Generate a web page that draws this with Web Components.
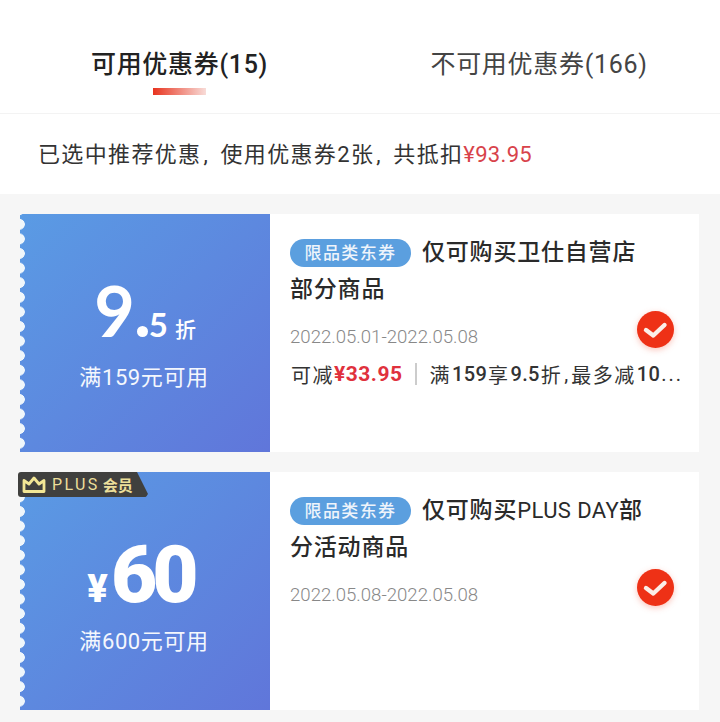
<!DOCTYPE html>
<html lang="zh-CN">
<head>
<meta charset="utf-8">
<title>优惠券</title>
<style>
  html, body { margin: 0; padding: 0; }
  body {
    width: 720px;
    height: 722px;
    overflow: hidden;
    background: #f6f6f6;
    font-family: "Roboto", "Noto Sans CJK SC", sans-serif;
  }
</style>
</head>
<body>
<coupon-tabs></coupon-tabs>
<coupon-summary>已选中推荐优惠<span class="comma">,</span>使用优惠券2张<span class="comma">,</span>共抵扣<span slot="amount">¥93.95</span></coupon-summary>
<coupon-list>
  <coupon-card range="2022.05.01-2022.05.08" limit="满159元可用" kind="discount">
    <span slot="first">仅可购买卫仕自营店</span>
    <span slot="second">部分商品</span>
    <coupon-note slot="note"></coupon-note>
  </coupon-card>
  <coupon-card range="2022.05.08-2022.05.08" limit="满600元可用" kind="cash" plus>
    <span slot="first">仅可购买<span style="font-size:22px;font-weight:400;letter-spacing:0.4px">PLUS DAY</span>部</span>
    <span slot="second">分活动商品</span>
  </coupon-card>
</coupon-list>

<script>
/* tabs on top */
class CouponTabs extends HTMLElement {
  constructor() {
    super();
    this.attachShadow({ mode: "open" });
    this.shadowRoot.innerHTML = `
      <style>
        :host {
          display: grid;
          grid-template-columns: 360px 360px;
          height: 113px;
          background: #fff;
          border-bottom: 1px solid #f3f3f3;
        }
        .tab {
          display: flex;
          flex-direction: column;
          align-items: center;
          padding-top: 45px;
          font-size: 25px;
          line-height: 40px;
          letter-spacing: 0.7px;
          color: #333;
        }
        .tab.on { color: #222; font-weight: 500; padding-right: 1px; }
        .tab.off { font-weight: 400; color: #444; padding-right: 2px; }
        .bar {
          width: 53px;
          height: 7px;
          margin-top: 3px;
          background: linear-gradient(90deg, #e8341f, #f8dcd8);
        }
        .tab > span { display: block; height: 40px; }
      </style>
      <div class="tab on"><span>可用优惠券(15)</span><div class="bar"></div></div>
      <div class="tab off"><span>不可用优惠券(166)</span></div>
    `;
  }
}
customElements.define("coupon-tabs", CouponTabs);

/* line under tabs */
class CouponSummary extends HTMLElement {
  constructor() {
    super();
    this.attachShadow({ mode: "open" });
    this.shadowRoot.innerHTML = `
      <style>
        :host {
          display: flex;
          align-items: center;
          height: 80px;
          padding-left: 38px;
          background: #fff;
          font-size: 22px;
          letter-spacing: 1.35px;
          color: #333;
        }
        div { margin-top: -4px; }
        ::slotted(span[slot="amount"]) { color: #d8434b; letter-spacing: 0.3px; }
        ::slotted(.comma) { display: inline-block; width: 19px; text-indent: 2px; }
      </style>
      <div><slot></slot><slot name="amount"></slot></div>
    `;
  }
}
customElements.define("coupon-summary", CouponSummary);

class CouponList extends HTMLElement {
  constructor() {
    super();
    this.attachShadow({ mode: "open" });
    this.shadowRoot.innerHTML = `
      <style>
        :host {
          display: flex;
          flex-direction: column;
          gap: 20px;
          padding: 20px 21px 0 20px;
        }
      </style>
      <slot></slot>
    `;
  }
}
customElements.define("coupon-list", CouponList);

/* 可减 row, only on first card */
class CouponNote extends HTMLElement {
  constructor() {
    super();
    this.attachShadow({ mode: "open" });
    this.shadowRoot.innerHTML = `
      <style>
        :host {
          display: flex;
          align-items: center;
          height: 32px;
          padding-left: 1px;
          font-size: 20px;
          letter-spacing: 1.5px;
          color: #333;
          white-space: nowrap;
        }
        .save { color: #e0313d; font-weight: 700; letter-spacing: 0.5px; font-size: 21px; }
        .sep { width: 2px; height: 22px; background: #ccc; margin: 0 13px 0 12px; flex: none; }
        b { font-weight: 500; letter-spacing: 0.3px; margin: 0 1px 0 1px; }
        .comma { display: inline-block; width: 20px; text-indent: 2px; }
        .more { letter-spacing: 2px; }
      </style>
      <span>可减</span><span class="save">¥33.95</span><span class="sep"></span><span>满</span><b>159</b><span>享</span><b>9.5</b><span>折</span><span class="comma">,</span><span>最多减</span><b>10</b><span class="more">...</span>
    `;
  }
}
customElements.define("coupon-note", CouponNote);

class CouponCard extends HTMLElement {
  constructor() {
    super();
    this.attachShadow({ mode: "open" });
  }
  connectedCallback() {
    const range = this.getAttribute("range") || "";
    const limit = this.getAttribute("limit") || "";
    const isCash = this.getAttribute("kind") === "cash";
    const value = isCash
      ? `<div class="value cash"><span class="yen">¥</span><span class="big">60</span></div>`
      : `<div class="value disc"><span class="nine">9</span><span class="dot"></span><span class="five">5</span><span class="zhe">折</span></div>`;
    const plus = this.hasAttribute("plus")
      ? `<div class="plus">
          <svg viewBox="0 0 24 18" fill="none" stroke="#f3e795" stroke-width="2.8" stroke-linejoin="round">
            <path d="M2 4.5 L7 8 L12 2 L17 8 L22 4.5 V15.5 H2 Z"/>
          </svg>
          <span class="plus-en">PLUS</span><span class="plus-cn">会员</span>
        </div>`
      : "";
    this.shadowRoot.innerHTML = `
      <style>
        :host {
          display: grid;
          grid-template-columns: 250px 1fr;
          height: 238px;
          background: #fff;
          position: relative;
        }
        .left {
          position: relative;
          display: flex;
          flex-direction: column;
          align-items: center;
          color: #fff;
          background: linear-gradient(135deg, #5a9be4 0%, #6076da 100%);
        }
        /* scalloped edge */
        .left::before {
          content: "";
          position: absolute;
          left: 0;
          top: 0;
          bottom: 0;
          width: 6px;
          background-image: radial-gradient(circle at -0.5px 50%, #f0f7fb 0, #f0f7fb 5px, transparent 5.6px);
          background-size: 6px 14.6px;
          background-position: 0 3px;
        }
        .value { display: flex; align-items: baseline; justify-content: center; }
        .disc { margin-top: 57px; height: 78px; font-family: "Lato", "Noto Sans CJK SC", sans-serif; }
        .nine { font-size: 70px; line-height: 78px; font-weight: 700; }
        .dot { width: 11px; height: 11px; border-radius: 50%; background: #fff; margin: 0 1px 0 2px; }
        .five { font-size: 33px; font-weight: 700; }
        .zhe { font-size: 21px; margin-left: 7px; font-weight: 500; font-family: "Noto Sans CJK SC", sans-serif; }
        .cash { margin-top: 64px; height: 77px; margin-right: 9px; font-family: "Roboto", sans-serif; }
        .yen { font-size: 38px; font-weight: 900; margin-right: 3px; line-height: 78px; }
        .big { font-size: 80px; font-weight: 900; line-height: 78px; letter-spacing: -5px; }
        .limit {
          font-size: 22px;
          line-height: 32px;
          letter-spacing: 0.6px;
          margin-top: 13px;
          padding-right: 2px;
          color: #f4f7fd;
          font-family: "Roboto", "Noto Sans CJK SC", sans-serif;
        }
        .plus {
          position: absolute;
          left: -2px;
          top: 0;
          height: 25px;
          width: 130px;
          padding-left: 4px;
          box-sizing: border-box;
          display: flex;
          align-items: center;
          background: #40403e;
          color: #ecdf9a;
          border-radius: 3px 0 3px 3px;
          clip-path: polygon(0 0, 119px 0, 130px 22px, 128px 25px, 0 25px);
          z-index: 1;
        }
        .plus svg { flex: none; margin-right: 6px; width: 24px; height: 18px; }
        .plus-en { font-size: 16px; letter-spacing: 2.4px; }
        .plus-cn { font-size: 15px; margin-left: 3px; font-weight: 700; font-family: "Noto Sans CJK SC", sans-serif; }
        .right {
          position: relative;
          padding: 20px 16px 0 20px;
          min-width: 0;
        }
        .title {
          font-size: 23px;
          line-height: 37px;
          letter-spacing: 0.8px;
          color: #2a2a2a;
          font-weight: 500;
        }
        .line { display: flex; align-items: center; height: 37px; }
        .tag {
          width: 121px;
          height: 28px;
          line-height: 28px;
          margin-right: 11px;
          flex: none;
          border-radius: 14px;
          background: #5b9fdf;
          color: #eef4fb;
          font-size: 17px;
          letter-spacing: 1.4px;
          text-align: center;
          font-weight: 500;
        }
        .date { font-size: 18.6px; line-height: 30px; margin-top: 14px; color: #888; font-weight: 300; }
        ::slotted(coupon-note) { margin-top: 6px; }
        .check {
          position: absolute;
          right: 25px;
          top: 97px;
          width: 37px;
          height: 37px;
          filter: drop-shadow(0 2px 3px rgba(240, 60, 30, .3));
        }
      </style>
      <div class="left">
        ${plus}
        ${value}
        <div class="limit">${limit}</div>
      </div>
      <div class="right">
        <div class="title">
          <div class="line"><span class="tag">限品类东券</span><slot name="first"></slot></div>
          <div class="line"><slot name="second"></slot></div>
        </div>
        <div class="date">${range}</div>
        <slot name="note"></slot>
        <svg class="check" viewBox="0 0 37 37">
          <circle cx="18.5" cy="18.5" r="18.5" fill="#ee3116"/>
          <path d="M9 19 L16.3 24.5 L27.5 14" fill="none" stroke="#fbeee8" stroke-width="4.4" stroke-linecap="round" stroke-linejoin="round"/>
        </svg>
      </div>
    `;
  }
}
customElements.define("coupon-card", CouponCard);
</script>
</body>
</html>
